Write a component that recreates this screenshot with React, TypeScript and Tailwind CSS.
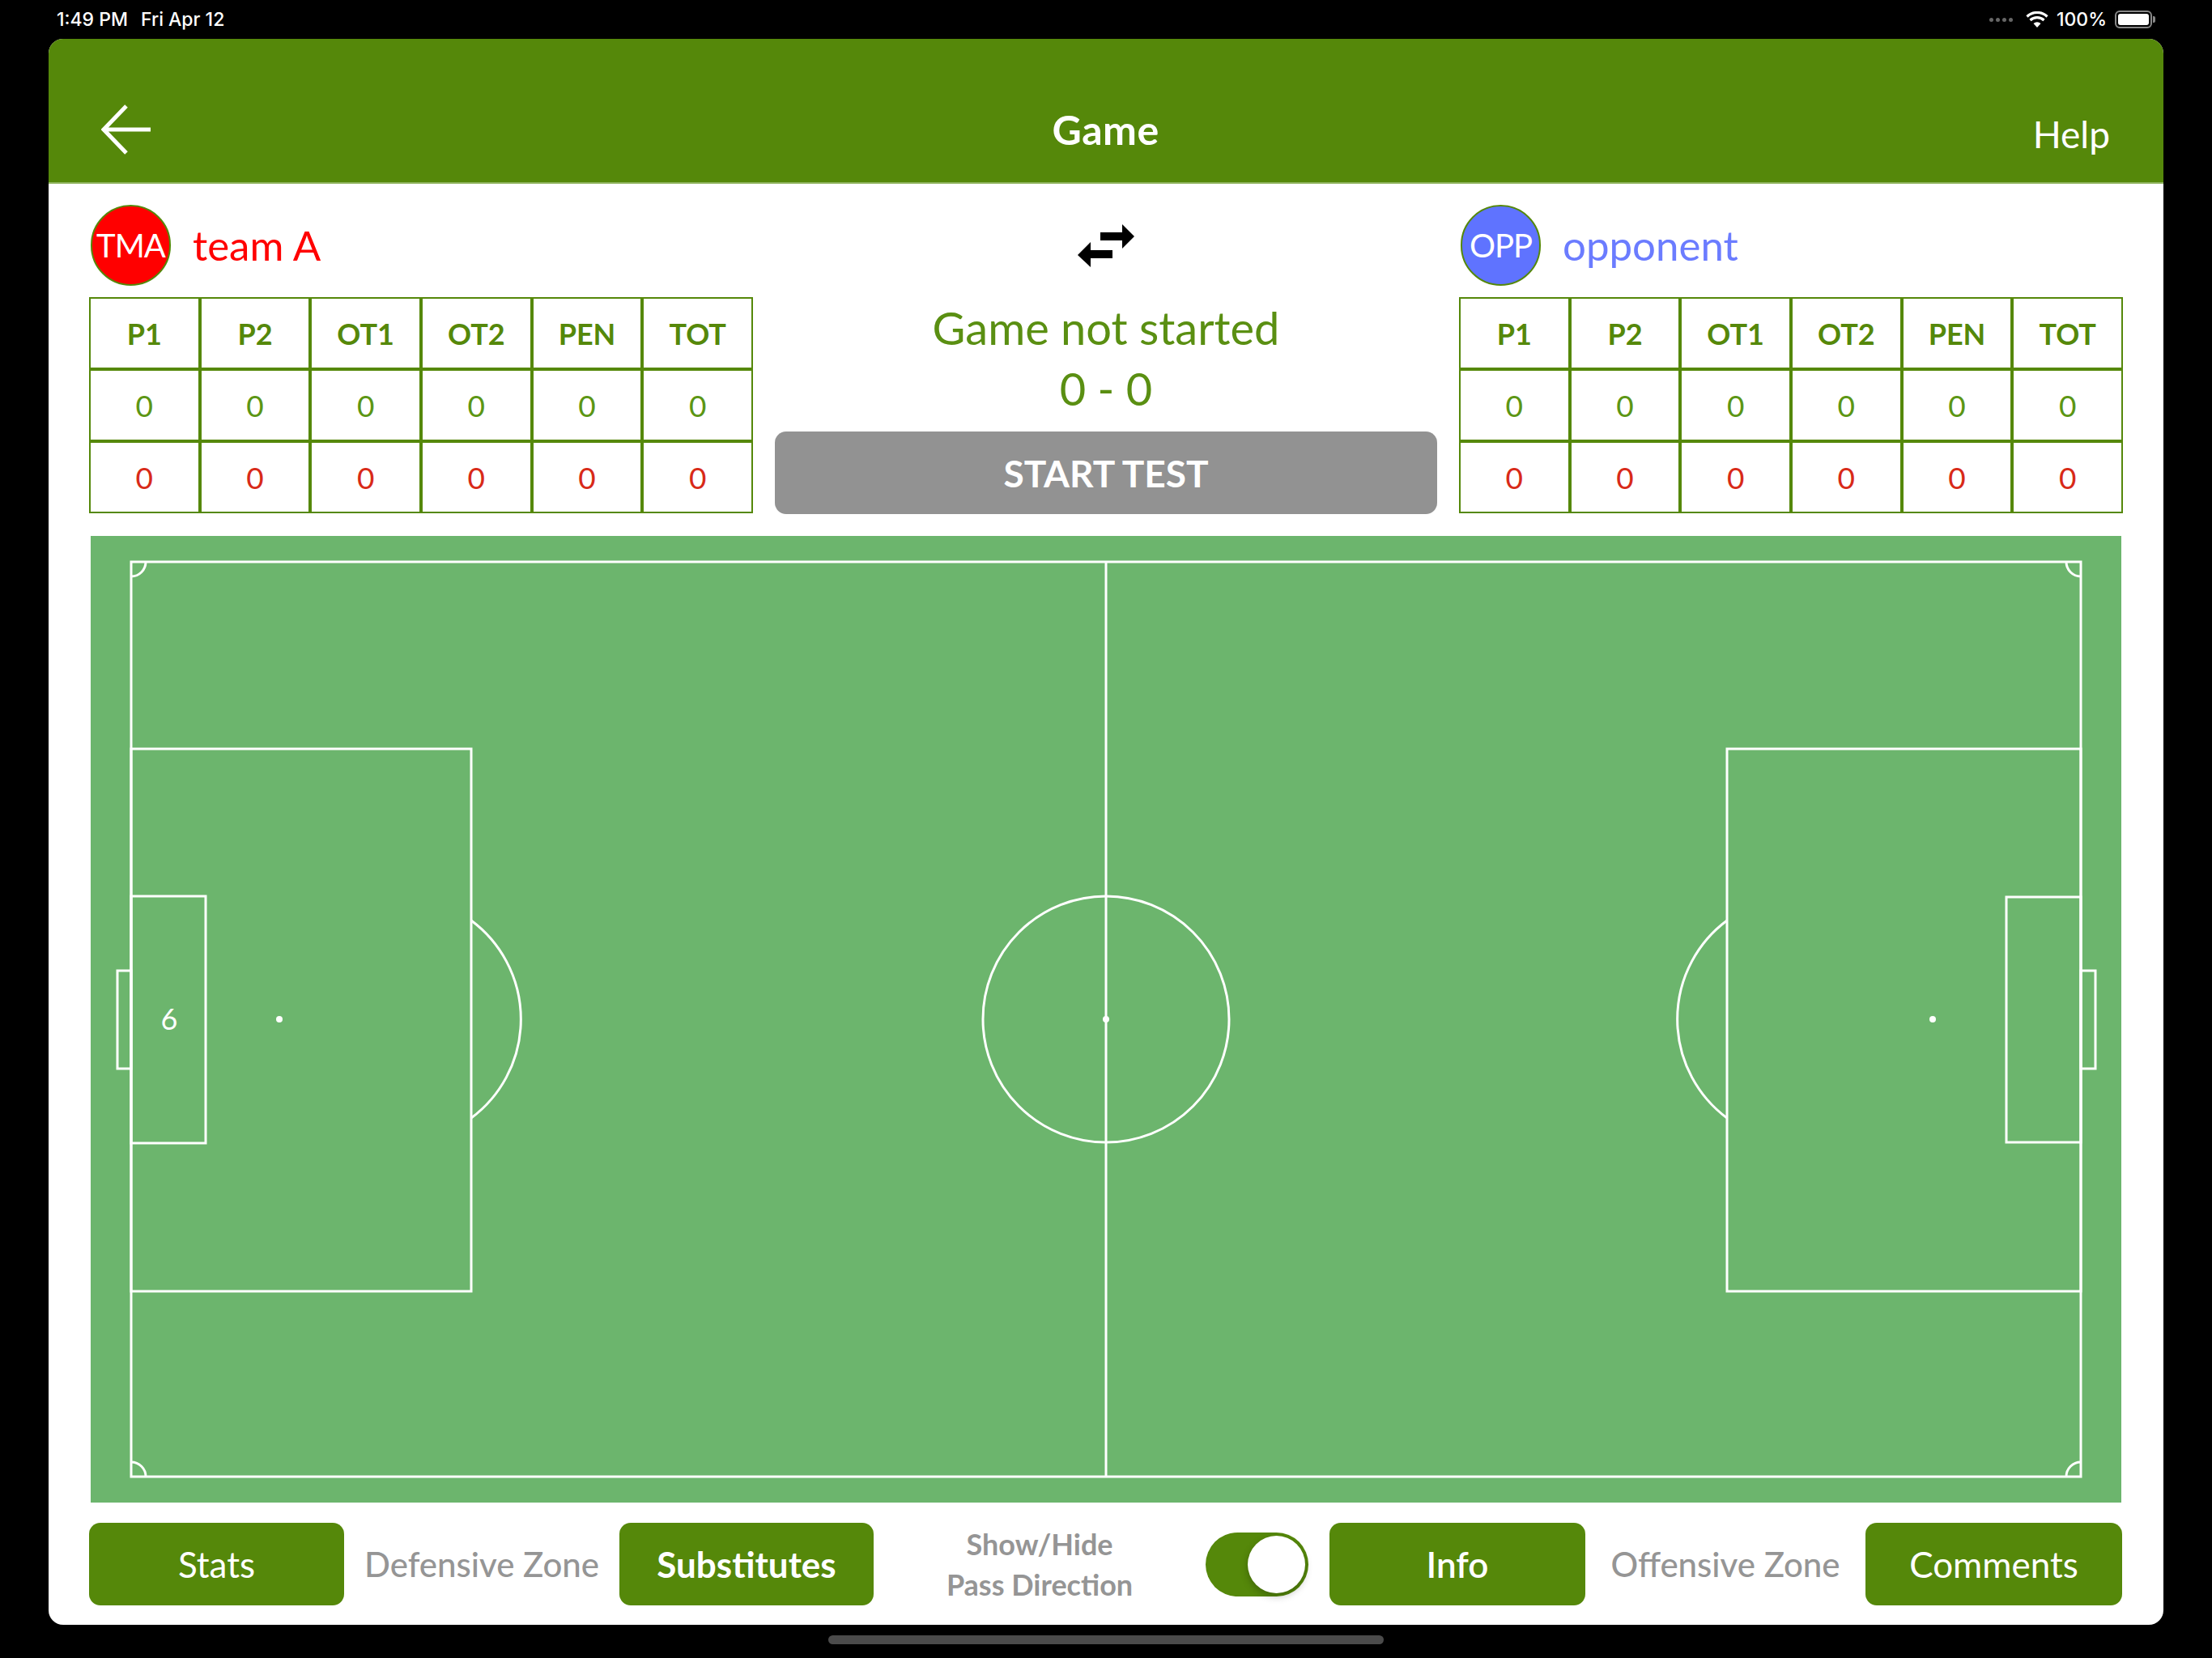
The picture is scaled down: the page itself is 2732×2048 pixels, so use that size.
import React from "react";

const periods = ["P1", "P2", "OT1", "OT2", "PEN", "TOT"];

const ScoreTable: React.FC = () => {
  return (
    <div className="grid grid-cols-6">
      {periods.map((p) => (
        <div
          key={p}
          className="h-[89px] border-2 border-[#55880a] flex items-center justify-center text-[36px] font-bold text-[#55880a]"
        >
          {p}
        </div>
      ))}
      {periods.map((p) => (
        <div
          key={"g" + p}
          className="h-[89px] border-2 border-[#55880a] flex items-center justify-center text-[37px] text-[#5c9614]"
        >
          0
        </div>
      ))}
      {periods.map((p) => (
        <div
          key={"r" + p}
          className="h-[89px] border-2 border-[#55880a] flex items-center justify-center text-[37px] text-[#d82a18]"
        >
          0
        </div>
      ))}
    </div>
  );
};

const TeamBadge: React.FC<{ short: string; name: string; circle: string; text: string }> = ({
  short,
  name,
  circle,
  text,
}) => (
  <div className="h-[100px] flex items-center">
    <div
      className={`ml-[2px] w-[99px] h-[100px] rounded-full border-2 border-[#55880a] flex items-center justify-center text-white text-[40px] tracking-[-1px] overflow-visible ${circle}`}
    >
      {short}
    </div>
    <span className={`ml-[27px] text-[51px] ${text}`}>{name}</span>
  </div>
);

const SwapIcon = () => (
  <svg width="74" height="57" viewBox="0 0 74 57">
    <rect x="30" y="12" width="28" height="10" fill="#000" />
    <polygon points="57,2 72,17 57,32" fill="#000" />
    <polygon points="18,24 2,40 18,55" fill="#000" />
    <rect x="17" y="34" width="28" height="10" fill="#000" />
  </svg>
);

const Pitch = () => (
  <svg width="2508" height="1194" viewBox="0 0 2508 1194" className="block">
    <g fill="none" stroke="#fff" strokeWidth="3">
      <rect x="50" y="32" width="2408" height="1130" />
      <line x1="1254" y1="32" x2="1254" y2="1162" />
      <circle cx="1254" cy="597" r="152" />
      {/* left end */}
      <rect x="50" y="263" width="420" height="670" />
      <rect x="50" y="445" width="92" height="305" />
      <rect x="33" y="537" width="17" height="121" />
      <path d="M470 475 A152 152 0 0 1 470 719" />
      {/* right end */}
      <rect x="2021" y="263" width="437" height="670" />
      <rect x="2366" y="446" width="92" height="303" />
      <rect x="2458" y="537" width="18" height="121" />
      <path d="M2021 475 A152 152 0 0 0 2021 719" />
      {/* corners */}
      <path d="M68 32 A18 18 0 0 1 50 50" />
      <path d="M2440 32 A18 18 0 0 0 2458 50" />
      <path d="M50 1144 A18 18 0 0 1 68 1162" />
      <path d="M2440 1162 A18 18 0 0 1 2458 1144" />
    </g>
    <circle cx="1254" cy="597" r="4" fill="#fff" />
    <circle cx="233" cy="597" r="4" fill="#fff" />
    <circle cx="2275" cy="597" r="4" fill="#fff" />
    <text
      x="97"
      y="610"
      fill="#fff"
      fontSize="36"
      textAnchor="middle"
      fontFamily="Lato, 'Noto Sans', sans-serif"
    >
      6
    </text>
  </svg>
);

const GreenButton: React.FC<{ label: string; w: string; weight?: string }> = ({ label, w, weight }) => (
  <button
    className={`${w} h-[102px] shrink-0 rounded-[14px] bg-[#55880a] text-white text-[44px] flex items-center justify-center ${weight ?? "font-normal"}`}
  >
    {label}
  </button>
);

export default function App() {
  return (
    <div className="w-[2732px] h-[2048px] bg-black flex flex-col font-['Lato','Noto_Sans',sans-serif] overflow-hidden">
      {/* status bar */}
      <div className="h-[48px] shrink-0 flex items-center justify-between px-[70px] pr-[70px] text-white font-['Inter',sans-serif] text-[23px]">
        <div className="flex gap-[16px] font-medium">
          <span>1:49 PM</span>
          <span>Fri Apr 12</span>
        </div>
        <div className="flex items-center gap-[10px] font-medium">
          <div className="flex items-end gap-[3px] mr-[6px]">
            <span className="w-[5px] h-[5px] rounded-full bg-[#666]" />
            <span className="w-[5px] h-[5px] rounded-full bg-[#666]" />
            <span className="w-[5px] h-[5px] rounded-full bg-[#666]" />
            <span className="w-[5px] h-[5px] rounded-full bg-[#666]" />
          </div>
          <svg width="28" height="21" viewBox="0 0 28 21">
            <path d="M14 20 L9.5 15 A7 7 0 0 1 18.5 15 Z" fill="#fff" />
            <path d="M5.5 11 A12.5 12.5 0 0 1 22.5 11" stroke="#fff" strokeWidth="3.2" fill="none" />
            <path d="M1.5 6.5 A18 18 0 0 1 26.5 6.5" stroke="#fff" strokeWidth="3.2" fill="none" />
          </svg>
          <span>100%</span>
          <div className="flex items-center">
            <div className="w-[46px] h-[22px] rounded-[6px] border-2 border-[#888] p-[2px]">
              <div className="w-full h-full rounded-[3px] bg-white" />
            </div>
            <div className="w-[3px] h-[8px] rounded-r-[2px] bg-[#888] ml-[1px]" />
          </div>
        </div>
      </div>

      {/* card */}
      <div className="mx-[60px] h-[1959px] shrink-0 bg-white rounded-[18px] overflow-hidden flex flex-col">
        <div className="h-[179px] shrink-0 bg-[#55880a] pt-[45px] border-b-2 border-[#8fb35e]">
          <div className="h-[134px] grid grid-cols-[1fr_auto_1fr] items-center pl-[65px] pr-[66px]">
            <svg width="62" height="64" viewBox="0 0 62 64">
              <path d="M61 32 H4 M31 3 L3 32 L31 61" fill="none" stroke="#fff" strokeWidth="5" />
            </svg>
            <span className="text-white text-[50px] font-bold tracking-[0.5px]">Game</span>
            <span className="justify-self-end text-white text-[46px] mt-[10px]">Help</span>
          </div>
        </div>

        <div className="flex-1 px-[50px] pt-[26px] flex flex-col">
          <div className="grid grid-cols-[820px_818px_820px] gap-x-[27px]">
            <div className="flex flex-col">
              <TeamBadge short="TMA" name="team A" circle="bg-[#ff0000]" text="text-[#ff0000]" />
              <div className="mt-[14px]">
                <ScoreTable />
              </div>
            </div>

            <div className="flex flex-col items-center">
              <div className="h-[100px] flex items-center">
                <SwapIcon />
              </div>
              <div className="mt-[22px] leading-[60px] text-[56px] text-[#5a8f12]">Game not started</div>
              <div className="mt-[15px] leading-[60px] text-[56px] text-[#5a8f12]">0 - 0</div>
              <button className="mt-[23px] w-full h-[102px] rounded-[14px] bg-[#929292] text-white text-[46px] font-bold">
                START TEST
              </button>
            </div>

            <div className="flex flex-col">
              <TeamBadge short="OPP" name="opponent" circle="bg-[#5f73ff]" text="text-[#6b7cff]" />
              <div className="mt-[14px]">
                <ScoreTable />
              </div>
            </div>
          </div>

          <div className="mt-[27px] mx-[2px] h-[1194px] bg-[#6cb56d]">
            <Pitch />
          </div>

          <div className="mt-[25px] h-[102px] flex items-center">
            <GreenButton label="Stats" w="w-[315px]" />
            <div className="w-[340px] text-center text-[42px] text-[#959595] font-medium">Defensive Zone</div>
            <GreenButton label="Substitutes" w="w-[314px]" weight="font-bold" />
            <div className="w-[410px] text-center text-[36px] leading-[50px] text-[#959595] font-bold">
              Show/Hide
              <br />
              Pass Direction
            </div>
            <div className="w-[127px] h-[79px] shrink-0 rounded-full bg-[#55880a] flex items-center justify-end pr-[4px]">
              <div className="w-[71px] h-[71px] rounded-full bg-white shadow-[0_4px_10px_rgba(0,0,0,0.25)]" />
            </div>
            <div className="w-[26px] shrink-0" />
            <GreenButton label="Info" w="w-[316px]" weight="font-semibold" />
            <div className="w-[346px] text-center text-[42px] text-[#959595] font-medium">Offensive Zone</div>
            <GreenButton label="Comments" w="w-[317px]" />
          </div>
        </div>
      </div>

      {/* home indicator */}
      <div className="flex-1 flex items-center justify-center">
        <div className="w-[686px] h-[11px] rounded-full bg-[#4b4b4b] mt-[-4px]" />
      </div>
    </div>
  );
}
